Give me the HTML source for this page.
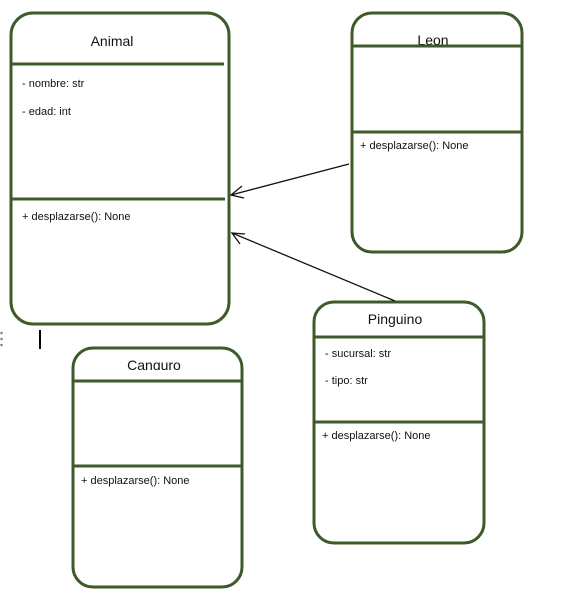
<!DOCTYPE html>
<html><head><meta charset="utf-8"><style>
html,body{margin:0;padding:0;background:#fff;width:574px;height:603px;overflow:hidden}
svg{display:block}
text{font-family:"Liberation Sans",sans-serif;fill:#111}
.t{font-size:14px}
.s{font-size:11px}
</style></head><body>
<svg width="574" height="603" viewBox="0 0 574 603">
<defs>
<clipPath id="cl"><rect x="352" y="13" width="170" height="31.5"/></clipPath>
<clipPath id="cc"><rect x="73" y="348" width="170" height="22"/></clipPath>
</defs>
<g fill="none" stroke="#3e5a28" stroke-width="3">
<rect x="11" y="13" width="218" height="311" rx="22"/>
<line x1="11" y1="64" x2="224" y2="64"/>
<line x1="11" y1="199" x2="225" y2="199"/>
<rect x="352" y="13" width="170" height="239" rx="20"/>
<line x1="352" y1="46" x2="522" y2="46"/>
<line x1="352" y1="132" x2="522" y2="132"/>
<rect x="314" y="302" width="170" height="241" rx="20"/>
<line x1="314" y1="337" x2="484" y2="337"/>
<line x1="314" y1="422" x2="484" y2="422"/>
<rect x="73" y="348" width="169" height="239" rx="20"/>
<line x1="73" y1="381" x2="242" y2="381"/>
<line x1="73" y1="466" x2="242" y2="466"/>
</g>
<g stroke="#111" stroke-width="1.3" fill="none">
<line x1="349" y1="164" x2="231" y2="195"/>
<polyline points="242,186 231,195 244,198"/>
<line x1="395" y1="301" x2="232" y2="233"/>
<polyline points="245,234 232,233 240,244"/>
</g>
<line x1="40" y1="330" x2="40" y2="349" stroke="#000" stroke-width="2"/>
<g fill="#888"><circle cx="1.5" cy="333" r="1.3"/><circle cx="1.5" cy="339" r="1.3"/><circle cx="1.5" cy="345" r="1.3"/></g>

<text class="t" x="112" y="46" text-anchor="middle">Animal</text>
<text class="s" x="22" y="87">- nombre: str</text>
<text class="s" x="22" y="115">- edad: int</text>
<text class="s" x="22" y="220">+ desplazarse(): None</text>

<text class="t" x="433" y="45" text-anchor="middle" clip-path="url(#cl)">Leon</text>
<text class="s" x="360" y="149">+ desplazarse(): None</text>

<text class="t" x="395" y="324" text-anchor="middle">Pinguino</text>
<text class="s" x="325" y="357">- sucursal: str</text>
<text class="s" x="325" y="384">- tipo: str</text>
<text class="s" x="322" y="439">+ desplazarse(): None</text>

<text class="t" x="154" y="370" text-anchor="middle" clip-path="url(#cc)">Canguro</text>
<text class="s" x="81" y="484">+ desplazarse(): None</text>
</svg>
</body></html>
